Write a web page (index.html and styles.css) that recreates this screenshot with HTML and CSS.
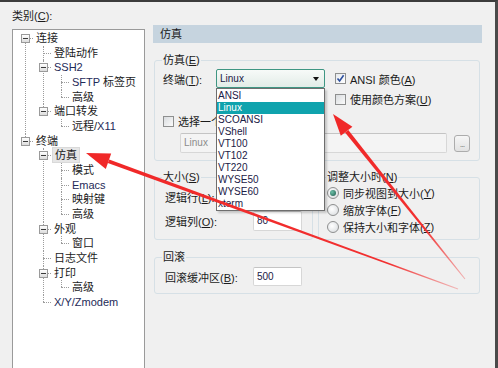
FILE: index.html
```html
<!DOCTYPE html>
<html lang="zh-CN">
<head>
    <meta charset="UTF-8">
    <title>会话选项 - 仿真</title>
    <link rel="stylesheet" href="styles.css">
</head>
<body>
<div class="window">
    <div class="left">
        <div class="cat-label">类别(<u>C</u>):</div>
        <div class="tree">
            <ul class="nodes">
                <li><span class="exp"></span><span class="txt">连接</span>
                    <ul>
                        <li><span class="txt">登陆动作</span></li>
                        <li><span class="exp"></span><span class="txt en">SSH2</span>
                            <ul>
                                <li><span class="txt"><span class="en">SFTP</span> 标签页</span></li>
                                <li><span class="txt">高级</span></li>
                            </ul>
                        </li>
                        <li><span class="exp"></span><span class="txt">端口转发</span>
                            <ul>
                                <li><span class="txt">远程/<span class="en">X11</span></span></li>
                            </ul>
                        </li>
                    </ul>
                </li>
                <li><span class="exp"></span><span class="txt">终端</span>
                    <ul>
                        <li><span class="exp"></span><span class="txt sel">仿真</span>
                            <ul>
                                <li><span class="txt">模式</span></li>
                                <li><span class="txt en">Emacs</span></li>
                                <li><span class="txt">映射键</span></li>
                                <li><span class="txt">高级</span></li>
                            </ul>
                        </li>
                        <li><span class="exp"></span><span class="txt">外观</span>
                            <ul>
                                <li><span class="txt">窗口</span></li>
                            </ul>
                        </li>
                        <li><span class="txt">日志文件</span></li>
                        <li><span class="exp"></span><span class="txt">打印</span>
                            <ul>
                                <li><span class="txt">高级</span></li>
                            </ul>
                        </li>
                        <li><span class="txt en">X/Y/Zmodem</span></li>
                    </ul>
                </li>
            </ul>
        </div>
    </div>

    <div class="right">
        <div class="head">仿真</div>

        <fieldset class="grp emu">
            <legend>仿真(<u>E</u>)</legend>
            <div class="row term-row">
                <span class="lbl term-lbl">终端(<u>T</u>):</span>
                <div class="combo">
                    <span class="combo-val">Linux</span>
                    <span class="combo-arrow"></span>
                    <ul class="droplist">
                        <li>ANSI</li>
                        <li class="hl">Linux</li>
                        <li>SCOANSI</li>
                        <li>VShell</li>
                        <li>VT100</li>
                        <li>VT102</li>
                        <li>VT220</li>
                        <li>WYSE50</li>
                        <li>WYSE60</li>
                        <li>xterm</li>
                    </ul>
                </div>
                <span class="chk on"><svg viewBox="0 0 11 11" width="11" height="11"><path d="M2.5 5.5 L4.6 8 L8.6 2.2" fill="none" stroke="#2d4f9e" stroke-width="1.6"/></svg></span>
                <span class="chk-lbl">ANSI 颜色(<u>A</u>)</span>
            </div>
            <div class="row scheme-row">
                <span class="chk"></span>
                <span class="chk-lbl">使用颜色方案(<u>U</u>)</span>
            </div>
            <div class="row pick-row">
                <span class="chk"></span>
                <span class="chk-lbl clipped">选择一个颜色方案(<u>S</u>):</span>
            </div>
            <div class="row scheme-field">
                <div class="field dis">Linux</div>
                <div class="btn">...</div>
            </div>
        </fieldset>

        <div class="pair">
            <fieldset class="grp size">
                <legend>大小(<u>S</u>)</legend>
                <div class="row num-row">
                    <span class="lbl num-lbl">逻辑行(<u>L</u>):</span>
                    <div class="field num">24</div>
                </div>
                <div class="row num-row second">
                    <span class="lbl num-lbl">逻辑列(<u>O</u>):</span>
                    <div class="field num">80</div>
                </div>
            </fieldset>
            <fieldset class="grp resize">
                <legend>调整大小时(<u>N</u>)</legend>
                <div class="radio-row"><span class="radio on"></span>同步视图到大小(<u>Y</u>)</div>
                <div class="radio-row"><span class="radio"></span>缩放字体(<u>F</u>)</div>
                <div class="radio-row"><span class="radio"></span>保持大小和字体(<u>Z</u>)</div>
            </fieldset>
        </div>

        <fieldset class="grp scroll">
            <legend>回滚</legend>
            <div class="row num-row">
                <span class="lbl num-lbl">回滚缓冲区(<u>B</u>):</span>
                <div class="field num">500</div>
            </div>
        </fieldset>
    </div>

    <!-- red annotation arrows drawn over the dialog -->
    <svg class="arrows" width="498" height="368" viewBox="0 0 498 368">
        <defs>
            <linearGradient id="fade1" gradientUnits="userSpaceOnUse" x1="465" y1="279" x2="346" y2="131">
                <stop offset="0" stop-color="#f23b3b" stop-opacity="0.35"/>
                <stop offset="0.35" stop-color="#f23030" stop-opacity="1"/>
                <stop offset="1" stop-color="#f02828"/>
            </linearGradient>
            <linearGradient id="fade2" gradientUnits="userSpaceOnUse" x1="458" y1="289" x2="108" y2="161">
                <stop offset="0" stop-color="#f23b3b" stop-opacity="0.3"/>
                <stop offset="0.2" stop-color="#f23030" stop-opacity="1"/>
                <stop offset="1" stop-color="#f02828"/>
            </linearGradient>
        </defs>
        <polygon points="348.3,130.0 345.0,132.6 464.6,279.3 465.4,278.7" fill="url(#fade1)"/>
        <polygon points="333,114 352.4,126.8 340.8,135.8" fill="#f02828"/>
        <polygon points="109.2,159.4 107.8,163.0 457.8,289.5 458.2,288.5" fill="url(#fade2)"/>
        <polygon points="86,153 111.2,153.5 105.8,168.9" fill="#f02828"/>
    </svg>
</div>
</body>
</html>
```

FILE: styles.css
```css
* {
    box-sizing: border-box;
}

body {
    margin: 0;
    background: #f0f0f0;
    font-family: "Liberation Sans", "Noto Sans CJK SC", sans-serif;
    font-size: 11px;
    color: #1b1b1b;
}

u {
    text-decoration: underline;
    text-underline-offset: 1px;
}

.window {
    position: relative;
    width: 498px;
    height: 368px;
    overflow: hidden;
    display: flex;
    border-top: 2px solid #3c3c3c;
    border-right: 3px solid #4a4a4a;
    background: #f0f0f0;
}

/* left: category tree */
.left {
    padding: 7px 0 0 12px;
    width: 145px;
    flex: none;
}

.cat-label {
    line-height: 14px;
    height: 14px;
    margin-bottom: 6px;
}

.tree {
    width: 133px;
    height: 360px;
    background: #fff;
    border: 1px solid #9a9a9a;
    padding-top: 1px;
}

.tree ul {
    list-style: none;
    margin: 0;
    padding: 0;
}

.tree ul ul {
    margin-left: -4px;
}

.tree li {
    position: relative;
    padding-left: 22px;
    line-height: 14.67px;
    white-space: nowrap;
}

.tree li::before {
    content: "";
    position: absolute;
    left: 12px;
    top: 7px;
    width: 8px;
    border-top: 1px dotted #9c9c9c;
}

.tree li::after {
    content: "";
    position: absolute;
    left: 12px;
    top: 0;
    bottom: 0;
    border-left: 1px dotted #9c9c9c;
}

.tree li:last-child::after {
    bottom: auto;
    height: 7px;
}

.tree .nodes > li:first-child::after {
    top: 7px;
}

.exp {
    position: absolute;
    z-index: 1;
    left: 8px;
    top: 3px;
    width: 9px;
    height: 9px;
    border: 1px solid #9a9a9a;
    background: linear-gradient(#ffffff, #dcdcdc);
}

.exp::after {
    content: "";
    position: absolute;
    left: 1px;
    top: 3px;
    width: 5px;
    height: 1px;
    background: #3a3a3a;
}

.txt {
    padding: 0 1px;
}

.en {
    color: #1e2a58;
}

.sel {
    background: #e6e6e6;
    outline: 1px solid #d9d9d9;
    padding: 1px 2px;
}

/* right: options panel */
.right {
    margin-left: 8px;
    padding-top: 23px;
    width: 329px;
    flex: none;
}

.head {
    height: 18px;
    line-height: 18px;
    padding-left: 7px;
    background: #c6d4df;
}

.grp {
    margin: 10px 2px 0 1px;
    padding: 2px 8px 7px;
    min-width: 0;
    border: 1px solid #d6e0e6;
    border-radius: 3px;
}

.grp legend {
    padding: 0 1px;
    margin-left: -1px;
    line-height: 14px;
}

.row {
    display: flex;
    align-items: center;
}

.term-row {
    height: 19px;
}

.term-lbl {
    width: 53px;
}

.combo {
    position: relative;
    width: 109px;
    height: 19px;
    border: 1px solid #3f9683;
    border-radius: 2px;
    background: linear-gradient(#f7faf8, #e2ece7);
    display: flex;
    align-items: center;
    padding-left: 3px;
    margin-right: 10px;
    font-size: 10px;
    color: #1a2046;
}

.combo-val {
    flex: 1;
}

.combo-arrow {
    width: 0;
    height: 0;
    margin-right: 5px;
    border-left: 3.5px solid transparent;
    border-right: 3.5px solid transparent;
    border-top: 4px solid #111;
}

.droplist {
    position: absolute;
    z-index: 5;
    top: 18px;
    left: -1px;
    width: 109px;
    margin: 0;
    padding: 1px 0 0;
    list-style: none;
    background: #fff;
    border: 1px solid #6e6e6e;
    box-shadow: 2px 2px 2px rgba(0, 0, 0, 0.18);
}

.droplist li {
    height: 12px;
    line-height: 12px;
    padding-left: 1px;
    font-size: 10px;
    color: #1a2046;
}

.droplist li.hl {
    background: #0fa3ad;
    color: #fff;
}

.chk {
    flex: none;
    width: 11px;
    height: 11px;
    border: 1px solid #8e8f8f;
    background: linear-gradient(135deg, #d9dcdf, #fbfbfb);
    position: relative;
}

.chk svg {
    position: absolute;
    left: -1px;
    top: -1px;
}

.chk.on {
    background: linear-gradient(135deg, #e6e9ee, #ffffff);
}

.chk-lbl {
    margin-left: 4px;
}

/* the rest of this label sits under the open drop-down list */
.chk-lbl.clipped {
    width: 38px;
    overflow: hidden;
    white-space: nowrap;
}

.scheme-row {
    height: 14px;
    margin-top: 4px;
    padding-left: 172px;
}

.pick-row {
    height: 14px;
    margin-top: 8px;
}

.scheme-field {
    margin-top: 5px;
    padding-left: 17px;
}

.field {
    height: 20px;
    line-height: 18px;
    border: 1px solid #d7d7d7;
    border-top-color: #c4c4c4;
    border-radius: 2px;
    background: #fff;
    padding-left: 3px;
    font-size: 10px;
    color: #1a2046;
}

.field.dis {
    width: 267px;
    background: #f4f4f4;
    color: #8c8c8c;
}

.btn {
    width: 16px;
    height: 17px;
    margin-left: 7px;
    border: 1px solid #acacac;
    border-radius: 3px;
    background: linear-gradient(#f6f6f6, #e2e2e2);
    color: #888;
    font-size: 9px;
    line-height: 16px;
    text-align: center;
    letter-spacing: -1px;
    align-self: flex-start;
    margin-top: 2px;
}

.pair {
    display: flex;
    gap: 5px;
    margin: 9px 2px 0 1px;
}

.pair .grp {
    margin: 0;
}

.size {
    width: 159px;
    padding-left: 10px;
    padding-top: 3px;
}

.size legend,
.scroll legend {
    margin-left: -3px;
}

.resize {
    flex: 1;
    padding-top: 1px;
    padding-bottom: 3px;
}

.num-lbl {
    width: 88px;
}

.field.num {
    width: 49px;
}

.num-row.second {
    margin-top: 4px;
}

.radio-row {
    display: flex;
    align-items: center;
    height: 16px;
    margin-bottom: 1px;
}

.radio {
    width: 12px;
    height: 12px;
    margin-right: 4px;
    border: 1px solid #8e8f8f;
    border-radius: 50%;
    background: radial-gradient(circle at 40% 40%, #ffffff, #d6d9dc);
    position: relative;
}

.radio.on::after {
    content: "";
    position: absolute;
    left: 2px;
    top: 2px;
    width: 6px;
    height: 6px;
    border-radius: 50%;
    background: radial-gradient(circle at 35% 35%, #6cc0a8, #1f5a4c);
}

.scroll {
    padding-left: 10px;
    padding-top: 3px;
    margin-top: 10px;
}

.scroll .field.num {
    height: 19px;
}

.arrows {
    position: absolute;
    z-index: 10;
    left: 0;
    top: -2px;
    pointer-events: none;
}
```
